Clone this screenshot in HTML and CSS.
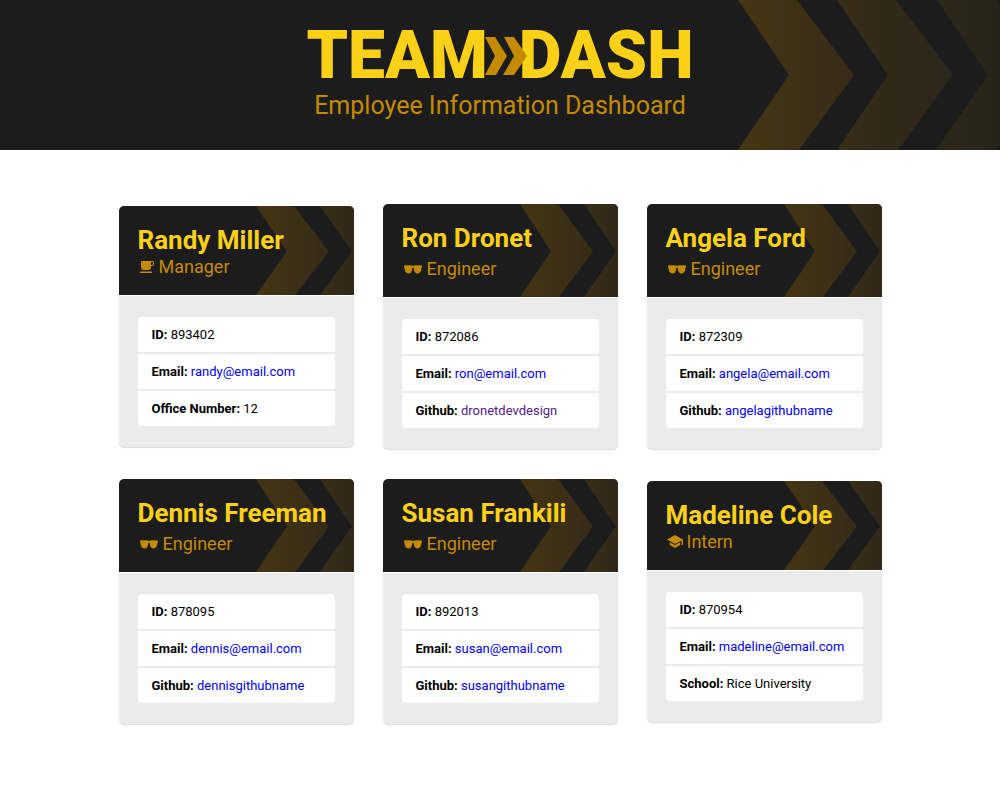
FILE: index.html
```
<!DOCTYPE html>
<html lang="en">
<head>
<meta charset="utf-8">
<meta name="viewport" content="width=device-width, initial-scale=1">
<title>Team Dash</title>
<link rel="stylesheet" href="styles.css">
</head>
<body>
<svg class="defs" aria-hidden="true">
  <defs>
    <linearGradient id="fade-wide" gradientUnits="userSpaceOnUse" x1="0" y1="0" x2="262" y2="0">
      <stop offset="0" stop-color="#463613"/><stop offset=".5" stop-color="#332a18"/><stop offset="1" stop-color="#262419"/>
    </linearGradient>
    <linearGradient id="fade-card" gradientUnits="userSpaceOnUse" x1="0" y1="0" x2="98" y2="0">
      <stop offset="0" stop-color="#443513"/><stop offset="1" stop-color="#302818"/>
    </linearGradient>
    <symbol id="chevrons" viewBox="0 0 98 92" preserveAspectRatio="none">
      <path fill="url(#fade-card)" d="M0 0H38L73 47L39 92H0L31 47ZM64 0H98V92H64L96 47Z"/>
    </symbol>
    <symbol id="cup" viewBox="0 0 14 14">
      <path fill="currentColor" fill-rule="evenodd" d="M1 1H13Q14 1 14 2V4Q14 6 12 6H11V7Q11 10 8 10H4Q1 10 1 7ZM11 2V5H12Q13 5 13 4V2ZM0 11.500H12V13H0Z"/>
    </symbol>
    <symbol id="glasses" viewBox="0 0 18 9">
      <path fill="currentColor" d="M0 0.600Q4 0 8 .6L9 1L10 .6Q14 0 18 .6V2.200L17.500 2.800Q17.300 8.500 13.500 8.500Q10.200 8.500 9.700 3.200L9 2.600L8.300 3.200Q7.800 8.500 4.500 8.500Q.7 8.500 .5 2.800L0 2.200Z"/>
    </symbol>
    <symbol id="cap" viewBox="0 0 16 14">
      <path fill="currentColor" d="M8 0L16 4.500V10H14.600V5.400L8 9L0 4.500ZM2.800 7.200L8 10L13.200 7.200V10L8 13L2.800 10Z"/>
    </symbol>
  </defs>
</svg>

<header class="banner">
  <svg class="banner-art" viewBox="0 0 262 150" preserveAspectRatio="none" aria-hidden="true">
    <path fill="url(#fade-wide)" d="M0 0H59L116 75L61 150H0L51 75ZM99 0H158L215 75L160 150H99L150 75ZM199 0H257L262 6V144L257 150H198L250 75Z"/>
  </svg>
  <h1 class="logo">TEAM<svg class="logo-mark" viewBox="0 0 42 38" aria-hidden="true"><path fill="#c48a00" d="M0 0H10L22 19L11 38H0L10 19ZM19 0H29L42 19L29 38H18L29 19Z"/></svg>DASH</h1>
  <p class="tagline">Employee Information Dashboard</p>
</header>

<main class="team">
  <article class="card">
    <div class="card-head">
      <svg class="card-art" aria-hidden="true"><use href="#chevrons"/></svg>
      <h2 class="name">Randy Miller</h2>
      <p class="role"><svg class="icon-cup" aria-hidden="true"><use href="#cup"/></svg>Manager</p>
    </div>
    <ul class="facts">
      <li><strong>ID:</strong> 893402</li>
      <li><strong>Email:</strong> <a href="mailto:randy@email.com">randy@email.com</a></li>
      <li><strong>Office Number:</strong> 12</li>
    </ul>
  </article>
  <article class="card">
    <div class="card-head engineer">
      <svg class="card-art" aria-hidden="true"><use href="#chevrons"/></svg>
      <h2 class="name">Ron Dronet</h2>
      <p class="role"><svg class="icon-glasses" aria-hidden="true"><use href="#glasses"/></svg>Engineer</p>
    </div>
    <ul class="facts">
      <li><strong>ID:</strong> 872086</li>
      <li><strong>Email:</strong> <a href="mailto:ron@email.com">ron@email.com</a></li>
      <li><strong>Github:</strong> <a class="seen" href="https://github.com/dronetdevdesign">dronetdevdesign</a></li>
    </ul>
  </article>
  <article class="card">
    <div class="card-head engineer">
      <svg class="card-art" aria-hidden="true"><use href="#chevrons"/></svg>
      <h2 class="name">Angela Ford</h2>
      <p class="role"><svg class="icon-glasses" aria-hidden="true"><use href="#glasses"/></svg>Engineer</p>
    </div>
    <ul class="facts">
      <li><strong>ID:</strong> 872309</li>
      <li><strong>Email:</strong> <a href="mailto:angela@email.com">angela@email.com</a></li>
      <li><strong>Github:</strong> <a href="https://github.com/angelagithubname">angelagithubname</a></li>
    </ul>
  </article>
  <article class="card">
    <div class="card-head engineer">
      <svg class="card-art" aria-hidden="true"><use href="#chevrons"/></svg>
      <h2 class="name">Dennis Freeman</h2>
      <p class="role"><svg class="icon-glasses" aria-hidden="true"><use href="#glasses"/></svg>Engineer</p>
    </div>
    <ul class="facts">
      <li><strong>ID:</strong> 878095</li>
      <li><strong>Email:</strong> <a href="mailto:dennis@email.com">dennis@email.com</a></li>
      <li><strong>Github:</strong> <a href="https://github.com/dennisgithubname">dennisgithubname</a></li>
    </ul>
  </article>
  <article class="card">
    <div class="card-head engineer">
      <svg class="card-art" aria-hidden="true"><use href="#chevrons"/></svg>
      <h2 class="name">Susan Frankili</h2>
      <p class="role"><svg class="icon-glasses" aria-hidden="true"><use href="#glasses"/></svg>Engineer</p>
    </div>
    <ul class="facts">
      <li><strong>ID:</strong> 892013</li>
      <li><strong>Email:</strong> <a href="mailto:susan@email.com">susan@email.com</a></li>
      <li><strong>Github:</strong> <a href="https://github.com/susangithubname">susangithubname</a></li>
    </ul>
  </article>
  <article class="card">
    <div class="card-head">
      <svg class="card-art" aria-hidden="true"><use href="#chevrons"/></svg>
      <h2 class="name">Madeline Cole</h2>
      <p class="role"><svg class="icon-cap" aria-hidden="true"><use href="#cap"/></svg>Intern</p>
    </div>
    <ul class="facts">
      <li><strong>ID:</strong> 870954</li>
      <li><strong>Email:</strong> <a href="mailto:madeline@email.com">madeline@email.com</a></li>
      <li><strong>School:</strong> Rice University</li>
    </ul>
  </article>
</main>
</body>
</html>
```
FILE: styles.css
```
* {
  box-sizing: border-box;
}

body {
  margin: 0;
  background: #fff;
  color: #000;
  font-family: Roboto, sans-serif;
}

.defs {
  position: absolute;
  width: 0;
  height: 0;
}

.banner {
  position: relative;
  padding: 21px 0 29px;
  background: #1c1c1c;
  text-align: center;
}

.banner-art {
  position: absolute;
  top: 0;
  right: 0;
  width: 262px;
  height: 100%;
}

.logo {
  position: relative;
  display: flex;
  justify-content: center;
  align-items: center;
  margin: 0;
  color: #fbd117;
  font-size: 66px;
  font-weight: 900;
  line-height: 70px;
}

.logo-mark {
  width: 42px;
  height: 38px;
  margin: 0 -8px 0 -3px;
  z-index: 1;
}

.tagline {
  position: relative;
  margin: 0;
  color: #c48a00;
  font-size: 25px;
  line-height: 30px;
}

.team {
  display: grid;
  grid-template-columns: repeat(3, 1fr);
  gap: 30px 29px;
  align-items: center;
  max-width: 763px;
  margin: 0 auto;
  padding: 54px 0;
}

.card {
  overflow: hidden;
  border-radius: 5px;
  background: #ebebeb;
  box-shadow: 0 1px 1px #dcdcdc;
}

.card-head {
  position: relative;
  padding: 20px 19px 16px;
  border-bottom: 1px solid #fff;
  background: #1c1c1c;
}

.card-art {
  position: absolute;
  top: 0;
  right: 0;
  width: 98px;
  height: 100%;
}

.name {
  position: relative;
  margin: 0;
  color: #fbd117;
  font-size: 26px;
  font-weight: 700;
  line-height: 29px;
}

.role {
  position: relative;
  display: flex;
  align-items: center;
  margin: 0;
  color: #c48a00;
  font-size: 18px;
  line-height: 24px;
}

.engineer .role {
  padding-top: 4px;
}

.icon-cup {
  width: 14px;
  height: 14px;
  margin: 0 5px 0 2px;
}

.icon-glasses {
  width: 18px;
  height: 9px;
  margin: 0 5px 0 2px;
}

.icon-cap {
  width: 16px;
  height: 14px;
  margin: 0 4px 0 1px;
}

.facts {
  display: grid;
  gap: 2px;
  margin: 21px 19px;
  padding: 0;
  overflow: hidden;
  border-radius: 4px;
  list-style: none;
  font-size: 13px;
  line-height: 19px;
}

.facts li {
  padding: 8px 14px;
  background: #fff;
}

.facts a {
  color: #0000ff;
  text-decoration: none;
}

.facts .seen {
  color: #551a8b;
}
```
